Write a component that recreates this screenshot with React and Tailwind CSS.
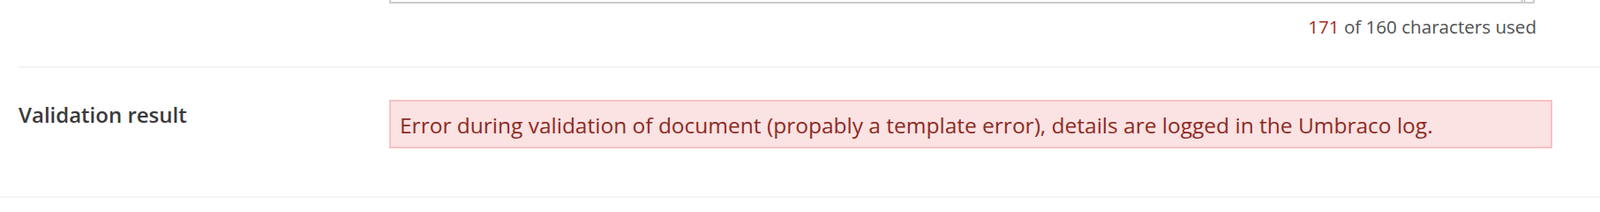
import React from 'react';

const font = { fontFamily: '"Open Sans", "Liberation Sans", sans-serif' };

// small diagonal grip shown at the bottom right corner of the textarea
const ResizeGrip = () => (
    <svg width="10" height="4" viewBox="0 0 10 4" className="absolute right-[6px] bottom-0">
        <line x1="3" y1="4" x2="5" y2="0" stroke="#9a9a9a" strokeWidth="1" />
        <line x1="6" y1="4" x2="8" y2="0" stroke="#9a9a9a" strokeWidth="1" />
    </svg>
);

const App = () => {
    return (
        <div className="w-[1813px] h-[234px] bg-white overflow-hidden" style={font}>
            {/* end of the SMS text field above */}
            <div className="flex">
                <div className="w-[441px] shrink-0" />
                <div className="w-[1298px]">
                    <div className="relative h-[4px] border-x-2 border-b-2 border-[#cccccc]">
                        <ResizeGrip />
                    </div>
                    <div className="flex justify-end pt-[11px] -mr-[2px] text-[20.6px] leading-[30px] text-[#515151]">
                        <span>
                            <span className="text-[#a82a24]">171</span> of 160 characters used
                        </span>
                    </div>
                </div>
            </div>

            <div className="ml-[21px] mt-[30px] border-t-2 border-[#f4f4f4]" />

            <div className="flex pl-[21px] pt-[36px] pb-[54px] border-b-2 border-[#f4f4f4]">
                <div className="w-[420px] shrink-0 text-[24px] leading-[34px] font-semibold text-[#3a3a3a]">
                    Validation result
                </div>
                <div className="w-[1318px] border-2 border-[#f8c1c4] bg-[#fbe2e3] px-[10px] pt-[9.5px] pb-[7.5px] text-[24.5px] leading-[34px] text-[#8e2a22]">
                    Error during validation of document (propably a template error), details are logged in the Umbraco log.
                </div>
            </div>
        </div>
    );
};

export default App;
